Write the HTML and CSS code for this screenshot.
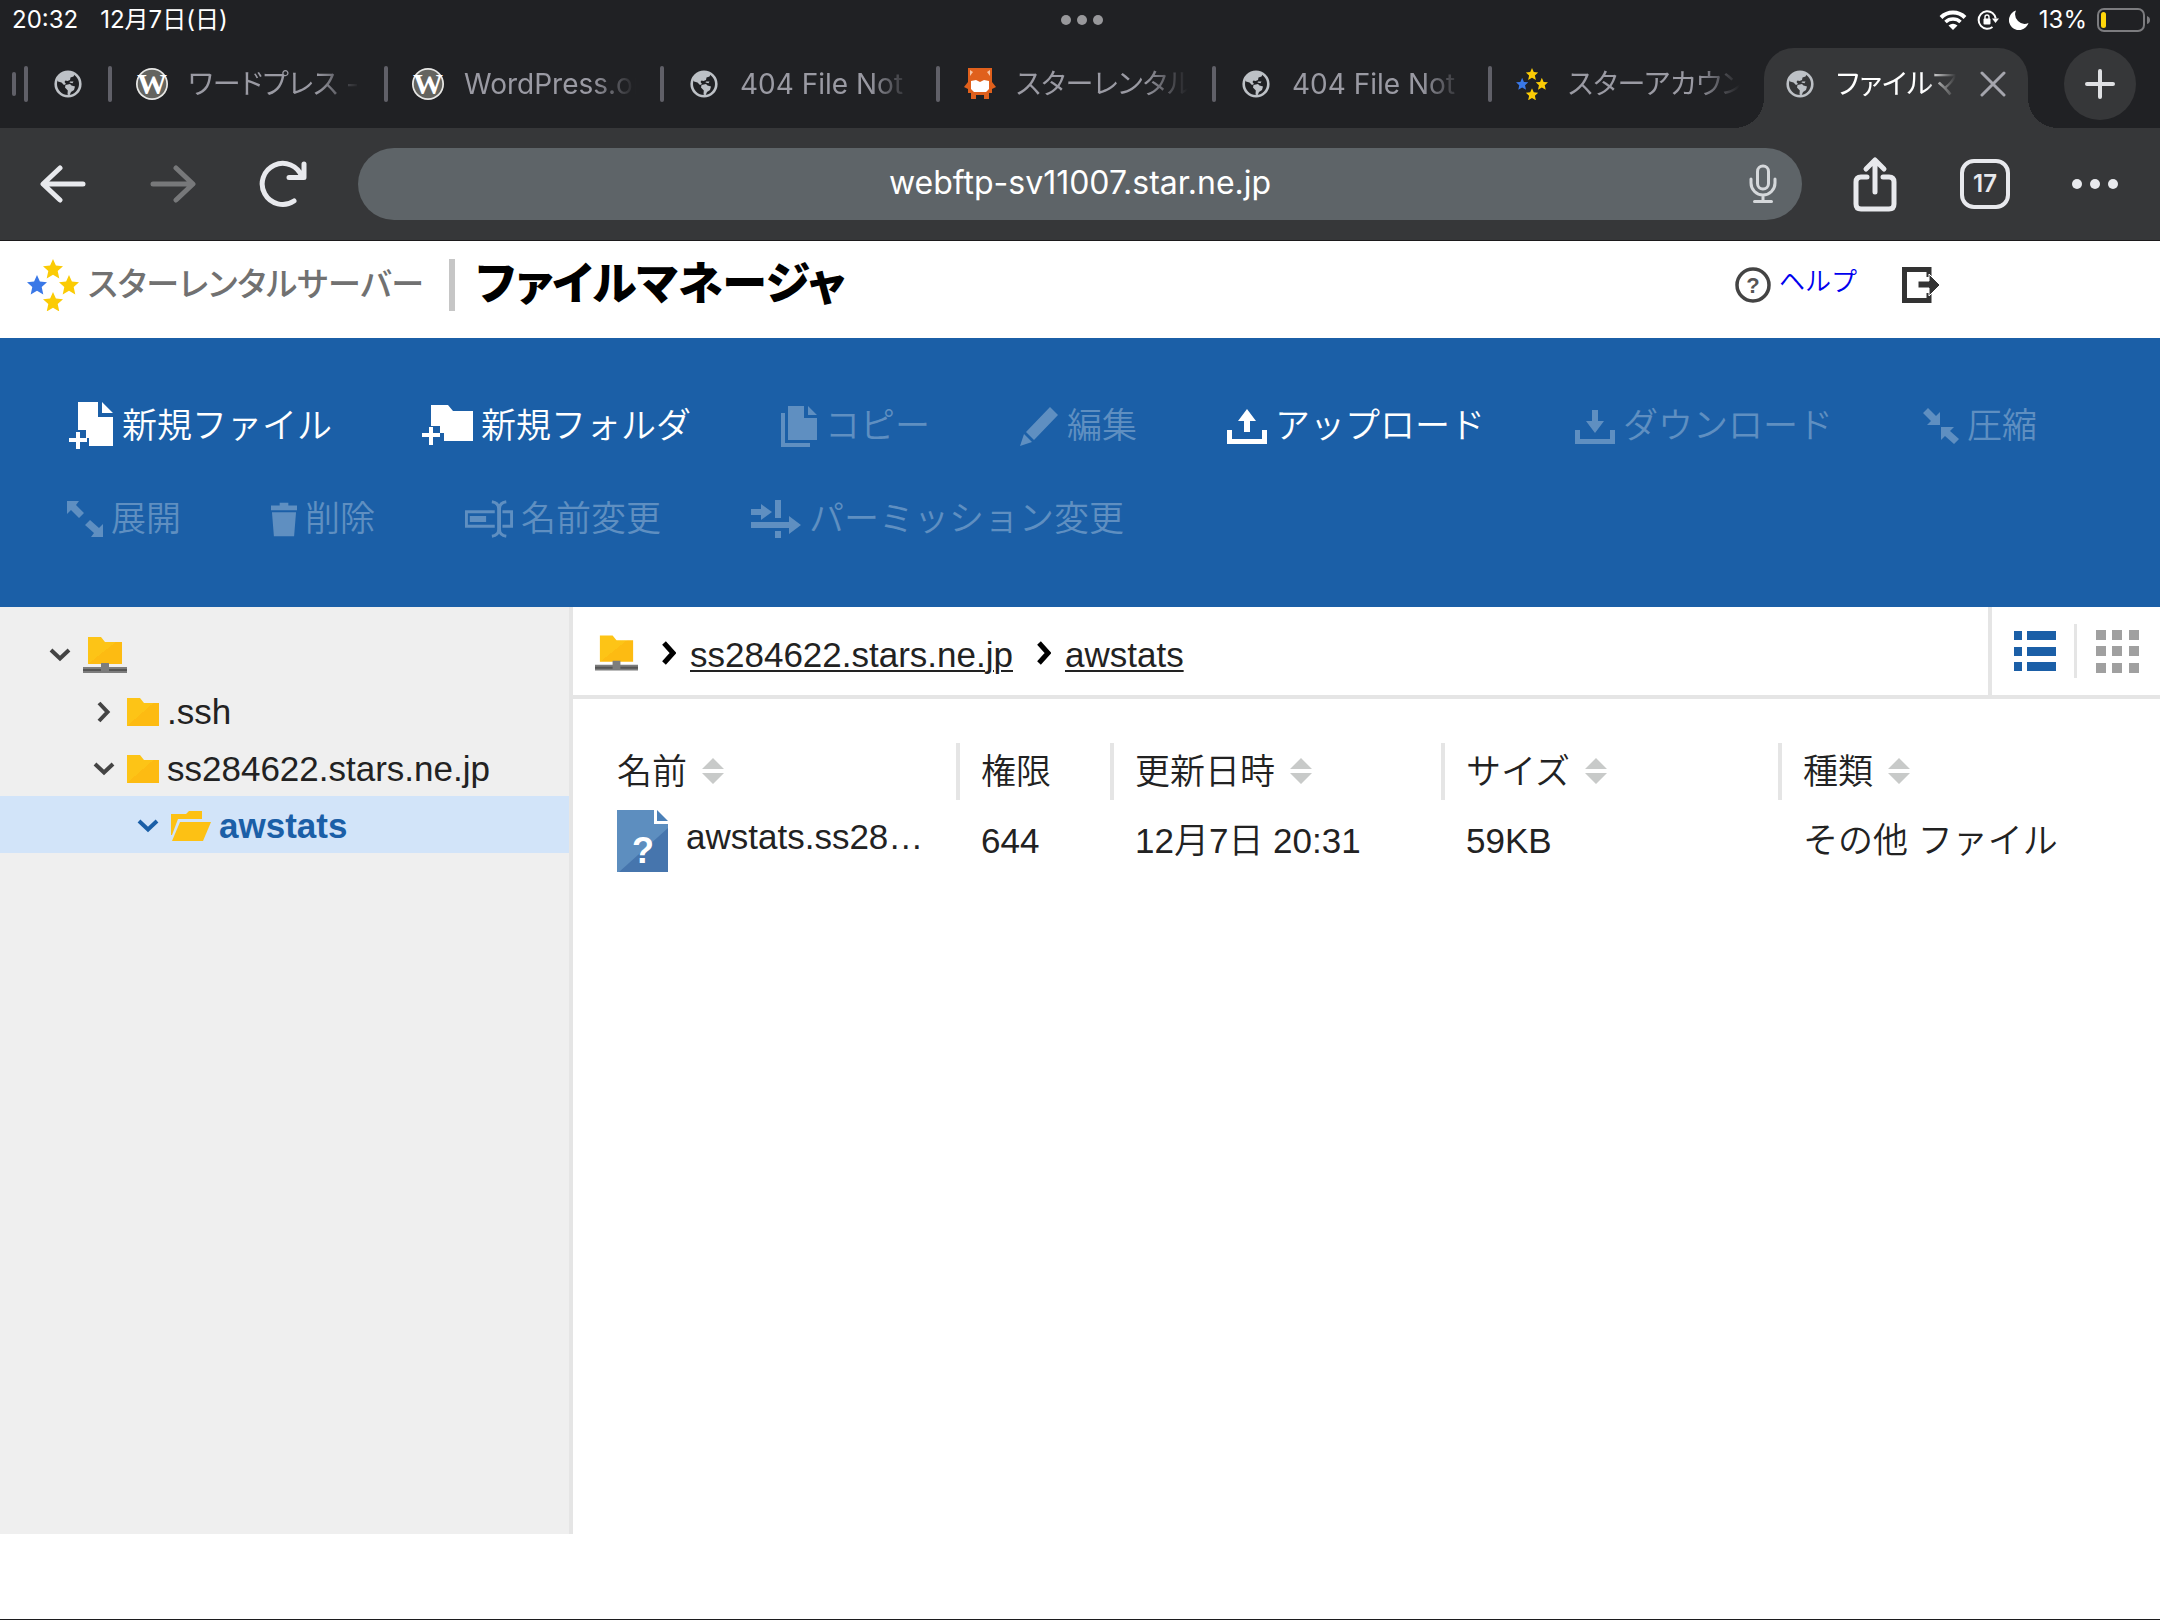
FILE: index.html
```html
<!DOCTYPE html>
<html lang="ja">
<head>
    <meta charset="UTF-8">
    <meta name="viewport" content="width=device-width, initial-scale=1.0">
    <title>ファイルマネージャ</title>
    <link rel="stylesheet" href="styles.css">
</head>
<body>
    <!-- 共通アイコン -->
    <svg class="defs" aria-hidden="true">
        <symbol id="globe" viewBox="0 0 32 32">
            <circle cx="16" cy="16" r="12.3" fill="none" stroke="#bdc1c6" stroke-width="2.6"/>
            <path d="M5 12C7 6 12 3 18 3.300L23 5.500L21.500 8.500L18.500 9.500L18 12L15.500 13L13.500 12.500L12.500 14L14 16L12 17L9.500 14.500L6 13.500ZM13.500 17L18 16L19.500 17.500L23 18.500L22 22L19 24L17.500 27.500L15.500 26.500L15.800 22.500L13 19.500ZM18 13.500L21.500 13.500L20.500 15.200L17.500 14.500Z" fill="#bdc1c6"/>
        </symbol>
        <symbol id="wp" viewBox="0 0 32 32">
            <circle cx="16" cy="16" r="16" fill="#e8e8e6"/>
            <circle cx="16" cy="16" r="14.3" fill="#64645f"/>
            <text x="16" y="26" text-anchor="middle" font-family="Liberation Serif, serif" font-weight="bold" font-size="30" fill="#fff">W</text>
        </symbol>
        <symbol id="star" viewBox="0 0 20 20">
            <path d="M10 0L12.900 6.600L20 7.300L14.700 12.100L16.300 19.500L10 15.700L3.700 19.500L5.300 12.100L0 7.300L7.100 6.600Z"/>
        </symbol>
        <symbol id="stars" viewBox="0 0 52 52">
            <use href="#star" x="16" y="0" width="20" height="20" fill="#fbcb05"/>
            <use href="#star" x="32" y="16" width="20" height="20" fill="#fbcb05"/>
            <use href="#star" x="16" y="33" width="20" height="20" fill="#fbcb05"/>
            <use href="#star" x="0" y="16" width="20" height="20" fill="#3a78e7"/>
        </symbol>
        <linearGradient id="gold" x1="0" y1="0" x2="1" y2="1">
            <stop offset="50%" stop-color="#fdc416"/>
            <stop offset="50%" stop-color="#fdbb12"/>
        </linearGradient>
        <symbol id="folder" viewBox="0 0 32 28">
            <path d="M0 0H13L17 5H32V28H0Z" fill="url(#gold)"/>
        </symbol>
        <symbol id="server" viewBox="0 0 44 36">
            <path d="M5 0H18L22 5H39V27H5Z" fill="url(#gold)"/>
            <path d="M0 30H18V26H26V30H44V36H0Z" fill="#7d7d7d"/>
            <path d="M0 32H18V34H0ZM26 32H44V34H26Z" fill="#555"/>
        </symbol>
        <symbol id="down" viewBox="0 0 22 22">
            <path d="M2 6L11 14.500L20 6" fill="none" stroke="currentColor" stroke-width="4"/>
        </symbol>
        <symbol id="right" viewBox="0 0 22 22">
            <path d="M6 2L14.500 11L6 20" fill="none" stroke="currentColor" stroke-width="4"/>
        </symbol>
        <symbol id="sort" viewBox="0 0 22 26">
            <path d="M0 11L11 0L22 11ZM0 15L11 26L22 15Z" fill="#c8cac9"/>
        </symbol>
    </svg>

    <div class="statusBar">
        <div class="statusLeft">
            <span>20:32</span>
            <span>12月7日(日)</span>
        </div>
        <svg class="grabber" width="44" height="10" viewBox="0 0 44 10" fill="#98989b"><circle cx="6" cy="5" r="5"/><circle cx="22" cy="5" r="5"/><circle cx="38" cy="5" r="5"/></svg>
        <div class="statusRight">
            <svg width="28" height="20" viewBox="0 0 28 20" fill="none" stroke="#fff">
                <path d="M2 7.500A17 17 0 0 1 26 7.500" stroke-width="4"/>
                <path d="M6.500 12A11 11 0 0 1 21.500 12" stroke-width="3.600"/>
                <path d="M14 20L9.500 15.500Q14 12 18.500 15.500Z" fill="#fff" stroke="none"/>
            </svg>
            <svg width="22" height="20" viewBox="0 0 22 20">
                <path d="M15.500 3A8.700 8.700 0 1 0 15.500 17M15.500 3A8.700 8.700 0 0 1 18.700 8.500" fill="none" stroke="#fff" stroke-width="2"/>
                <path d="M15 8.500H22L18.500 13Z" fill="#fff"/>
                <rect x="6.500" y="8.500" width="7" height="6" rx="1" fill="#fff"/>
                <path d="M8 9V7A2 2 0 0 1 12 7V9" fill="none" stroke="#fff" stroke-width="1.400"/>
            </svg>
            <svg width="20" height="20" viewBox="0 0 20 20"><path d="M7 0.500A10 10 0 1 0 19.500 13A9.500 9.500 0 0 1 7 0.500Z" fill="#fff"/></svg>
            <span>13%</span>
            <svg width="54" height="24" viewBox="0 0 54 24">
                <rect x="1" y="1" width="46" height="22" rx="6" fill="none" stroke="#7c7c7f" stroke-width="2"/>
                <rect x="4" y="4" width="5" height="16" rx="2.500" fill="#ffd60a"/>
                <path d="M50 8Q53 9 53 12T50 16Z" fill="#7c7c7f"/>
            </svg>
        </div>
    </div>

    <div class="tabStrip">
        <span class="sep sepSmall"></span>
        <button class="tab tabCut" aria-label="タブ"><span class="sep"></span><svg class="favicon"><use href="#globe"/></svg></button>
        <button class="tab"><span class="sep"></span><svg class="favicon"><use href="#wp"/></svg><span class="tabTitle">ワードプレス - </span></button>
        <button class="tab"><span class="sep"></span><svg class="favicon"><use href="#wp"/></svg><span class="tabTitle">WordPress.org</span></button>
        <button class="tab"><span class="sep"></span><svg class="favicon"><use href="#globe"/></svg><span class="tabTitle">404 File Not</span></button>
        <button class="tab"><span class="sep"></span><svg class="favicon" viewBox="0 0 32 32">
            <path d="M4 0H28V14L32 19L28 21V25H25V31H20V27H12V31H7V25H4V21L0 19L4 14Z" fill="#e0601c"/>
            <path d="M7 13L12 12L16 14L20 12L25 13V21L22 24H10L7 21Z" fill="#fff"/>
            <path d="M6 2L9 4L6 8ZM26 2L23 4L26 8Z" fill="#f6c4a4"/>
        </svg><span class="tabTitle">スターレンタル</span></button>
        <button class="tab"><span class="sep"></span><svg class="favicon"><use href="#globe"/></svg><span class="tabTitle">404 File Not</span></button>
        <button class="tab"><span class="sep"></span><svg class="favicon"><use href="#stars"/></svg><span class="tabTitle">スターアカウン</span></button>
        <div class="tab tabActive">
            <svg class="favicon"><use href="#globe"/></svg>
            <span class="tabTitle">ファイルマ</span>
            <button class="tabClose" aria-label="閉じる"><svg width="26" height="26" viewBox="0 0 26 26" fill="none" stroke="#a5a5ad" stroke-width="3" stroke-linecap="round"><path d="M2 2L24 24M24 2L2 24"/></svg></button>
        </div>
        <button class="newTab" aria-label="新しいタブ"><svg width="30" height="30" viewBox="0 0 30 30" fill="none" stroke="#dfe0e3" stroke-width="4" stroke-linecap="round"><path d="M15 2V28M2 15H28"/></svg></button>
    </div>

    <div class="browserBar">
        <button class="navButton" aria-label="戻る"><svg width="46" height="38" viewBox="0 0 46 38"><path d="M20 3L3 19L20 35M4 19H43"/></svg></button>
        <button class="navButton navOff" aria-label="進む" disabled><svg width="46" height="38" viewBox="0 0 46 38"><path d="M26 3L43 19L26 35M42 19H3"/></svg></button>
        <button class="navButton" aria-label="再読み込み"><svg width="48" height="48" viewBox="0 0 48 48"><path d="M35 41A20.500 20.500 0 1 1 43 17M45 4V17.500H30"/></svg></button>
        <div class="omnibox">
            <input class="url" type="text" aria-label="アドレス" value="webftp-sv11007.star.ne.jp">
            <button class="mic" aria-label="音声検索"><svg width="28" height="40" viewBox="0 0 28 40" fill="none" stroke="#d5d8db" stroke-width="3" stroke-linecap="round"><rect x="8.500" y="2" width="11" height="23" rx="5.500"/><path d="M2 15V19A12 12 0 0 0 26 19V15M14 31V37M5.500 37.500H22.500"/></svg></button>
        </div>
        <button class="navButton" aria-label="共有"><svg width="44" height="56" viewBox="0 0 44 56"><path d="M14 21H8Q3 21 3 26V48Q3 53 8 53H36Q41 53 41 48V26Q41 21 36 21H30M22 36V5M13 13L22 4L31 13"/></svg></button>
        <button class="navButton" aria-label="タブ一覧"><span class="tabCount">17</span></button>
        <button class="navButton" aria-label="メニュー"><svg class="dots" width="46" height="10" viewBox="0 0 46 10"><circle cx="5" cy="5" r="5"/><circle cx="23" cy="5" r="5"/><circle cx="41" cy="5" r="5"/></svg></button>
    </div>

    <header class="header">
        <svg class="logoStars" width="52" height="52"><use href="#stars"/></svg>
        <span class="logoText">スターレンタルサーバー</span>
        <h1 class="title">ファイルマネージャ</h1>
        <a class="help" href="#">
            <svg width="36" height="36" viewBox="0 0 36 36"><circle cx="18" cy="18" r="16" fill="none" stroke="#444" stroke-width="3.500"/><text x="18" y="26" text-anchor="middle" font-family="Liberation Sans, sans-serif" font-weight="bold" font-size="22" fill="#555">?</text></svg>
            <span>ヘルプ</span>
        </a>
        <a class="logout" href="#" aria-label="ログアウト"><svg width="38" height="36" viewBox="0 0 38 36"><path d="M27 10V2.500H2.500V33.500H27V26" fill="none" stroke="#333" stroke-width="5"/><path d="M16 14H27V7L38 18L27 29V21H16Z" fill="#333" stroke="#fff" stroke-width="1"/></svg></a>
    </header>

    <nav class="actions">
        <button class="action"><svg width="47" height="48" viewBox="-2 0 47 48"><path d="M9 0H29V15H44V44H20V36H17V28H9ZM33 0L44 11H33Z"/><path d="M7 30H11V36H18V40H11V47H7V40H0V36H7Z"/></svg>新規ファイル</button>
        <button class="action"><svg width="51" height="42" viewBox="0 0 51 42"><path d="M9 0H26L31 6H51V36H22V28H18V21H9Z"/><path d="M7 22H11V28H18V32H11V40H7V32H0V28H7Z"/></svg>新規フォルダ</button>
        <button class="action" disabled><svg width="36" height="42" viewBox="0 0 36 42"><path d="M7 1H23V13H36V35H7ZM27 1L36 10H27Z"/><path d="M0 8H4V38H29V42H0Z"/></svg>コピー</button>
        <button class="action" disabled><svg width="39" height="40" viewBox="0 0 39 40"><path d="M30 1L38 9L14 34L6 26ZM4 28L12 36L0 40Z"/></svg>編集</button>
        <button class="action"><svg width="40" height="36" viewBox="0 0 40 36"><path d="M0 22H5V31H35V22H40V36H0ZM20 1L29 13H23V24H17V13H11Z"/></svg>アップロード</button>
        <button class="action" disabled><svg width="40" height="36" viewBox="0 0 40 36"><path d="M0 22H5V31H35V22H40V36H0ZM20 25L11 13H17V2H23V13H29Z"/></svg>ダウンロード</button>
        <button class="action" disabled><svg width="36" height="36" viewBox="0 0 36 36"><path d="M17 17H4L8 13L0 5L5 0L13 8L17 4ZM18 19H31L27 23L36 31L31 36L22 28L18 32Z"/></svg>圧縮</button>
        <button class="action" disabled><svg width="36" height="36" viewBox="0 0 36 36"><path d="M0 0H12L9 4L17 12L12 17L4 9L0 13ZM36 36H24L27 32L18 24L23 19L32 27L36 23Z"/></svg>展開</button>
        <button class="action" disabled><svg width="26" height="36" viewBox="0 0 27 36"><path d="M0 4H9V1H18V4H27V9H0ZM1 11H26L24 36H3Z"/></svg>削除</button>
        <button class="action" disabled><svg width="48" height="38" viewBox="0 0 50 38"><path d="M31 10H0V28H31V25H3V13H31ZM5 16H22V22H5ZM39 10H50V28H39V25H47V13H39Z"/><path d="M28 1Q35 2 35 8V30Q35 36 28 37M43 1Q36 2 36 8V30Q36 36 43 37" fill="none" stroke="#5f8fc1" stroke-width="3"/></svg>名前変更</button>
        <button class="action" disabled><svg width="50" height="38" viewBox="0 0 50 38"><path d="M0 9H10V4L21 12L10 20V15H0ZM24 0H30V18H24ZM0 22H38V16L50 25L38 34V28H0ZM24 31H30V38H24Z"/></svg>パーミッション変更</button>
    </nav>

    <div class="main">
        <ul class="tree">
            <li class="node level0"><svg class="arrow"><use href="#down"/></svg><svg width="44" height="36"><use href="#server"/></svg></li>
            <li class="node level1"><svg class="arrow"><use href="#right"/></svg><svg width="32" height="28"><use href="#folder"/></svg><a href="#">.ssh</a></li>
            <li class="node level1"><svg class="arrow"><use href="#down"/></svg><svg width="32" height="28"><use href="#folder"/></svg><a href="#">ss284622.stars.ne.jp</a></li>
            <li class="node level2 selected"><svg class="arrow"><use href="#down"/></svg><svg width="40" height="30" viewBox="0 0 40 30" fill="#fdc114"><path d="M0 3H15L18 0H31V8H7L1 24H0Z"/><path d="M9 11H40L32 30H1Z"/></svg><a href="#">awstats</a></li>
        </ul>
        <div class="content">
            <div class="pathBar">
                <div class="crumbs">
                    <svg width="43" height="36"><use href="#server"/></svg>
                    <svg class="crumbArrow" viewBox="0 0 14 24"><path d="M2 2L11 12L2 22"/></svg>
                    <a href="#">ss284622.stars.ne.jp</a>
                    <svg class="crumbArrow" viewBox="0 0 14 24"><path d="M2 2L11 12L2 22"/></svg>
                    <a href="#">awstats</a>
                </div>
                <div class="views">
                    <button class="viewList" aria-label="リスト表示"><svg width="42" height="40" viewBox="0 0 42 40" fill="#1b5fa7"><path d="M0 0H8V9H0ZM13 0H42V9H13ZM0 16H8V25H0ZM13 16H42V25H13ZM0 31H8V40H0ZM13 31H42V40H13Z"/></svg></button>
                    <button class="viewGrid" aria-label="アイコン表示"><svg width="43" height="43" viewBox="0 0 43 43" fill="#a0a0a0"><path d="M0 0H10V10H0ZM16 0H26V10H16ZM33 0H43V10H33ZM0 16H10V26H0ZM16 16H26V26H16ZM33 16H43V26H33ZM0 33H10V43H0ZM16 33H26V43H16ZM33 33H43V43H33Z"/></svg></button>
                </div>
            </div>
            <table class="files">
                <thead>
                    <tr>
                        <th class="colName">名前<svg class="sort"><use href="#sort"/></svg></th>
                        <th class="colPerm">権限</th>
                        <th class="colDate">更新日時<svg class="sort"><use href="#sort"/></svg></th>
                        <th class="colSize">サイズ<svg class="sort"><use href="#sort"/></svg></th>
                        <th>種類<svg class="sort"><use href="#sort"/></svg></th>
                    </tr>
                </thead>
                <tbody>
                    <tr>
                        <td>
                            <div class="fileName">
                                <svg width="51" height="62" viewBox="0 0 51 62">
                                    <path d="M0 0H37V14H51V62H0Z" fill="#5d8ebf"/>
                                    <path d="M51 18V62H2Z" fill="#4675ad"/>
                                    <path d="M40 0L51 11H40Z" fill="#4a80b8"/>
                                    <text x="26" y="53" text-anchor="middle" font-family="Liberation Sans, sans-serif" font-weight="bold" font-size="36" fill="#fff">?</text>
                                </svg>
                                <span>awstats.ss28…</span>
                            </div>
                        </td>
                        <td>644</td>
                        <td>12月7日 20:31</td>
                        <td>59KB</td>
                        <td>その他 ファイル</td>
                    </tr>
                </tbody>
            </table>
        </div>
    </div>
</body>
</html>
```
FILE: styles.css
```css
*{
    box-sizing: border-box;
}
body{
    margin: 0;
    min-height: 100vh;
    display: flex;
    flex-direction: column;
    background-color: #fff;
    border-bottom: 1px solid #1c1c1e;
    font-family: "Liberation Sans", "Noto Sans CJK JP", sans-serif;
    font-size: 35px;
    color: #222;
}
button{
    margin: 0;
    padding: 0;
    border: 0;
    background: none;
    font: inherit;
    color: inherit;
}
a{
    color: inherit;
    text-decoration: none;
}
svg{
    flex-shrink: 0;
}
.defs{
    position: absolute;
    width: 0;
    height: 0;
}

/* ステータスバー */
.statusBar{
    height: 40px;
    padding: 0 9px 0 12px;
    display: grid;
    grid-template-columns: 1fr auto 1fr;
    align-items: center;
    background-color: #202124;
    color: #fff;
    font-family: Inter, "Noto Sans CJK JP", sans-serif;
    font-size: 24px;
    line-height: 40px;
}
.statusLeft{
    display: flex;
    gap: 22px;
}
.statusRight{
    display: flex;
    justify-content: flex-end;
    align-items: center;
    gap: 10px;
}

/* タブ */
.tabStrip{
    height: 88px;
    padding: 8px 24px 0 12px;
    display: flex;
    background-color: #202124;
    color: #9a9aa3;
    font-family: Inter, "Noto Sans CJK JP", sans-serif;
    font-size: 28px;
    line-height: 40px;
}
.sep{
    flex: none;
    width: 4px;
    height: 36px;
    margin-right: 24px;
    border-radius: 2px;
    background-color: #606068;
}
.sepSmall{
    height: 24px;
    margin: 24px 8px 0 0;
}
.tab{
    flex: 1;
    min-width: 0;
    height: 72px;
    display: flex;
    align-items: center;
    text-align: left;
}
.tabCut{
    flex: none;
    width: 84px;
}
.favicon{
    width: 32px;
    height: 32px;
}
.tabTitle{
    flex: 1;
    margin: 0 24px 0 20px;
    overflow: hidden;
    white-space: pre;
    font-feature-settings: "palt";
    -webkit-mask-image: linear-gradient(to right, #000 75%, transparent);
    mask-image: linear-gradient(to right, #000 75%, transparent);
}
.tabActive{
    flex: none;
    position: relative;
    width: 264px;
    height: 80px;
    padding: 0 22px 8px 20px;
    border-radius: 30px 30px 0 0;
    background-color: #363739;
    color: #fff;
}
.tabActive::before, .tabActive::after{
    content: "";
    position: absolute;
    bottom: 0;
    width: 30px;
    height: 30px;
}
.tabActive::before{
    left: -30px;
    background: radial-gradient(circle at 0 0, transparent 30px, #363739 30px);
}
.tabActive::after{
    right: -30px;
    background: radial-gradient(circle at 100% 0, transparent 30px, #363739 30px);
}
.tabClose, .newTab, .mic{
    display: flex;
    align-items: center;
    justify-content: center;
}
.newTab{
    width: 72px;
    height: 72px;
    margin-left: 36px;
    border-radius: 50%;
    background-color: #363739;
}

/* アドレスバー */
.browserBar{
    height: 113px;
    padding: 0 10px 0 8px;
    display: flex;
    align-items: center;
    background-color: #363739;
    border-bottom: 1px solid #1c1a1c;
}
.navButton{
    width: 110px;
    height: 72px;
    display: flex;
    align-items: center;
    justify-content: center;
    fill: none;
    stroke: #e8e9ed;
    stroke-width: 5;
    stroke-linecap: round;
    stroke-linejoin: round;
    color: #e8e9ed;
}
.navOff{
    stroke: #77787a;
}
.dots{
    fill: #e8e9ed;
    stroke: none;
}
.tabCount{
    width: 50px;
    height: 50px;
    border: 4px solid #e8e9ed;
    border-radius: 14px;
    font: 600 24px/42px Inter, sans-serif;
    text-align: center;
}
.omnibox{
    flex: 1;
    height: 72px;
    margin: 0 18px 0 20px;
    padding-left: 78px;
    display: flex;
    border-radius: 36px;
    background-color: #5e6468;
}
.url{
    flex: 1;
    min-width: 0;
    padding: 0 0 3px;
    border: 0;
    background: none;
    color: #fff;
    font: 32px Inter, sans-serif;
    text-align: center;
}
.mic{
    width: 78px;
}

/* ヘッダー */
.header{
    height: 97px;
    padding: 0 220px 10px 27px;
    display: flex;
    align-items: center;
}
.logoText{
    margin-left: 9px;
    font-size: 33px;
    line-height: 48px;
    font-weight: 500;
    font-feature-settings: "palt";
    color: #717171;
}
.title{
    margin: 0 auto 0 25px;
    padding-left: 21px;
    border-left: 6px solid #c6c6c6;
    font-size: 45px;
    line-height: 52px;
    font-weight: 900;
    font-feature-settings: "palt";
    color: #000;
}
.help{
    display: flex;
    align-items: flex-start;
    gap: 8px;
    font-size: 26px;
    line-height: 30px;
    font-weight: 350;
    color: #0000ee;
}
.logout{
    display: flex;
    margin-left: 45px;
}

/* 操作メニュー */
.actions{
    padding: 65px 67px 66px;
    display: flex;
    flex-wrap: wrap;
    gap: 48px 90px;
    background-color: #1b5fa7;
    color: #fff;
    fill: #fff;
}
.action{
    height: 45px;
    display: flex;
    align-items: center;
    gap: 8px;
    font-weight: 350;
    line-height: 45px;
    white-space: nowrap;
}
.action:disabled{
    color: #5f8fc1;
    fill: #5f8fc1;
}

/* フォルダツリー */
.main{
    flex: 1;
    display: flex;
    margin-bottom: 85px;
}
.tree{
    flex: none;
    width: 573px;
    margin: 0;
    padding: 18px 0 0;
    list-style: none;
    background-color: #efefef;
    border-right: 4px solid #e5e5e5;
}
.node{
    height: 57px;
    padding-top: 3px;
    display: flex;
    align-items: center;
}
.node a{
    margin-left: 8px;
}
.level0{
    padding-left: 49px;
}
.level1{
    padding-left: 93px;
}
.level2{
    padding-left: 137px;
}
.arrow{
    width: 22px;
    height: 22px;
    margin-right: 12px;
    color: #444;
}
.selected, .selected .arrow{
    color: #1b5fa7;
}
.selected{
    background-color: #d2e4f9;
    font-weight: bold;
}

/* ファイル一覧 */
.content{
    flex: 1;
    min-width: 0;
}
.pathBar{
    height: 92px;
    display: flex;
    border-bottom: 4px solid #e5e5e5;
}
.crumbs{
    flex: 1;
    padding: 4px 0 0 22px;
    display: flex;
    align-items: center;
}
.crumbs a{
    margin-left: 14px;
    padding-top: 4px;
    text-decoration: underline;
    text-decoration-thickness: 2px;
    text-underline-offset: 3px;
}
.crumbArrow{
    width: 14px;
    height: 24px;
    margin-left: 24px;
    fill: none;
    stroke: #000;
    stroke-width: 5;
}
.views{
    display: flex;
    align-items: center;
    border-left: 4px solid #e5e5e5;
}
.views button{
    height: 54px;
    display: flex;
    align-items: center;
}
.viewList{
    padding: 0 18px 0 22px;
}
.views .viewGrid{
    padding: 0 21px 0 19px;
    border-left: 3px solid #e5e5e5;
}
.files{
    width: 100%;
    margin-top: 44px;
    border-spacing: 0;
    table-layout: fixed;
}
.files th, .files td{
    padding: 0 0 0 25px;
    text-align: left;
    white-space: nowrap;
    font-weight: 350;
    line-height: 54px;
}
.files th{
    height: 57px;
}
.files th + th{
    padding-left: 21px;
    border-left: 4px solid #e5e5e5;
}
.files td{
    padding-top: 10px;
}
.files th:first-child, .files td:first-child{
    padding-left: 44px;
}
.colName{
    width: 383px;
}
.colPerm{
    width: 154px;
}
.colDate{
    width: 331px;
}
.colSize{
    width: 337px;
}
.sort{
    width: 22px;
    height: 26px;
    margin-left: 15px;
}
.fileName{
    display: flex;
    gap: 18px;
}
```
